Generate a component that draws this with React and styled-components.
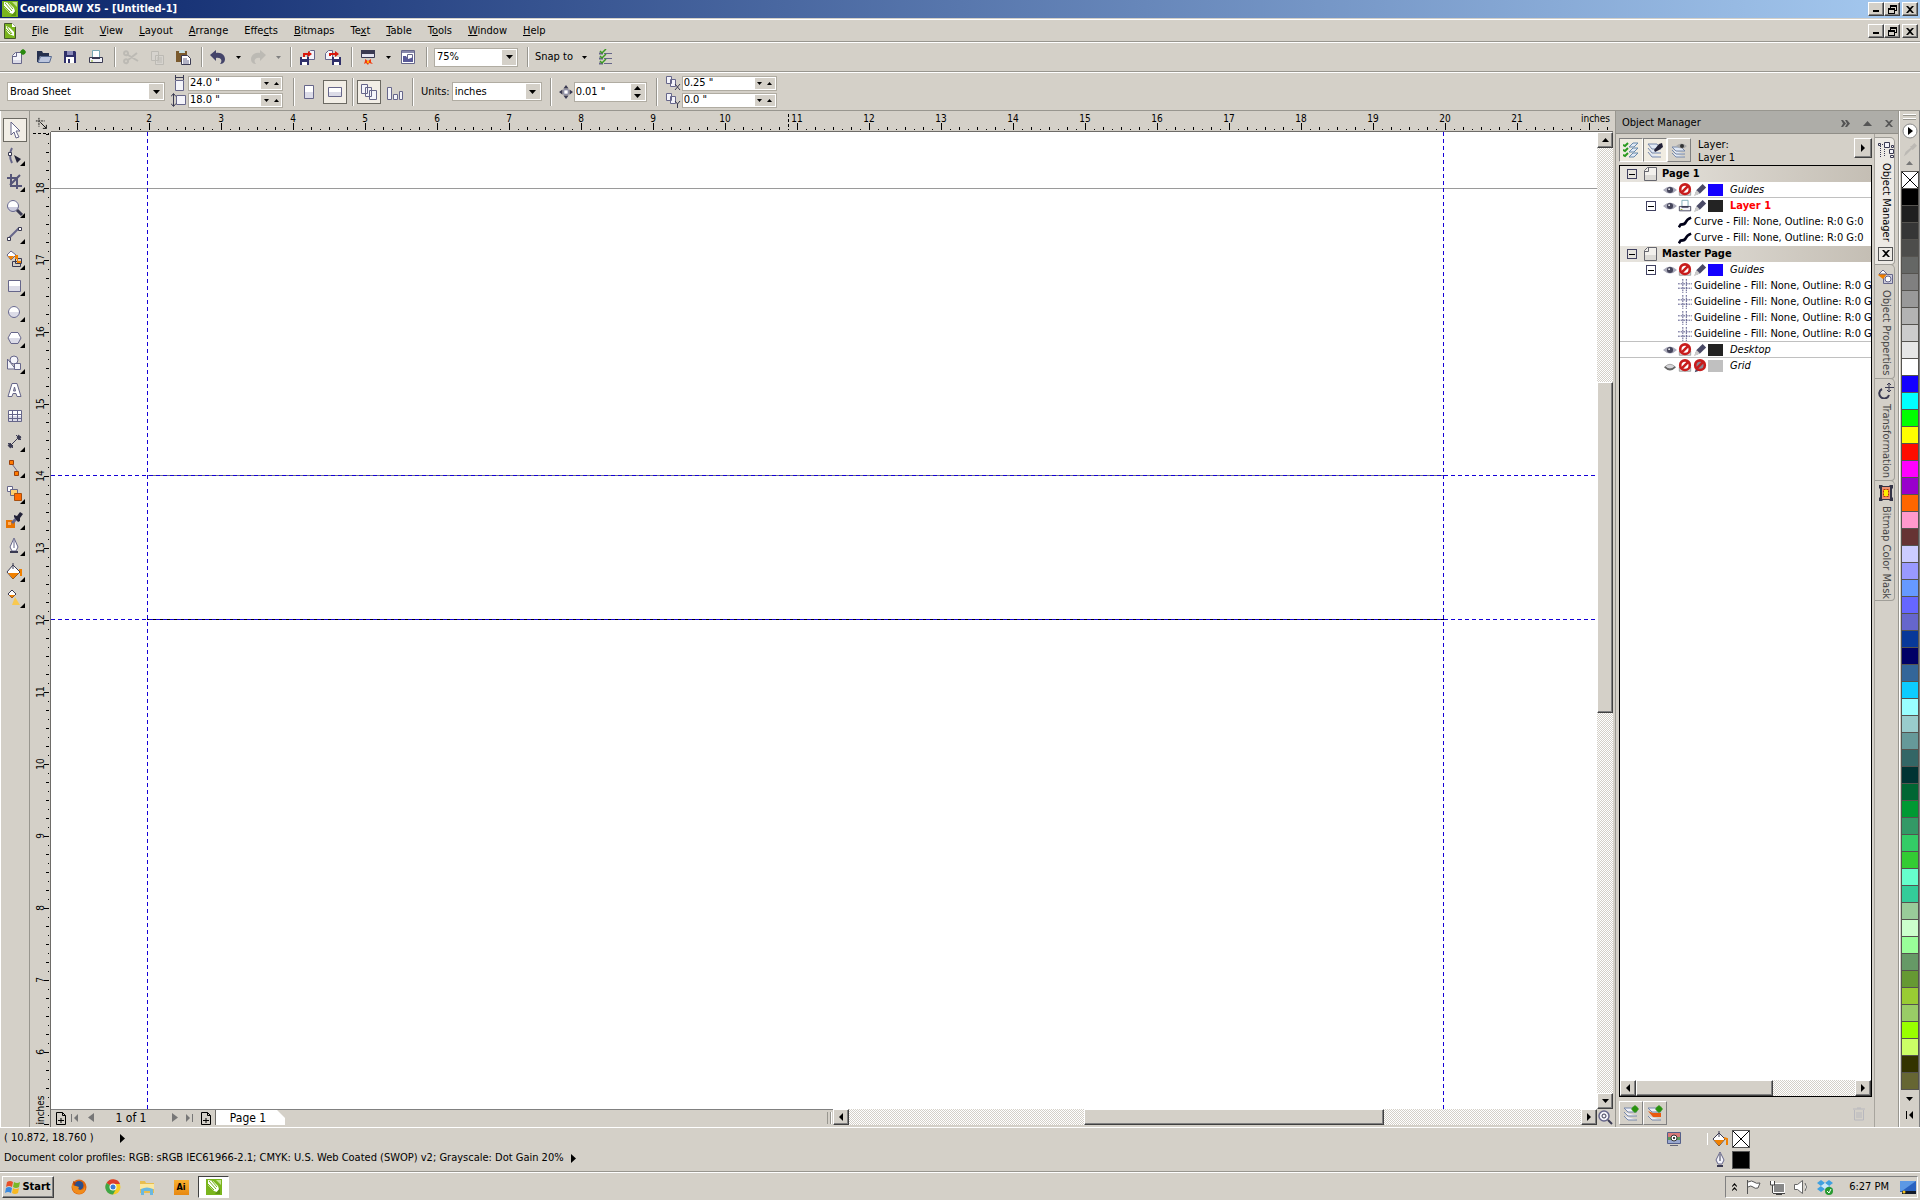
// src/App.jsx
import React, { useState } from 'react';
import styled, { createGlobalStyle, css } from 'styled-components';

const FACE = '#d4d0c8';
const SHADOW = '#808080';
const CHECKER = 'repeating-conic-gradient(#ffffff 0 25%, #d4d0c8 0 50%) 0 0 / 2px 2px';

const GlobalStyle = createGlobalStyle`
    * {
        box-sizing: border-box;
    }

    body {
        margin: 0;
        background: ${FACE};
        color: #000;
        font-family: 'DejaVu Sans Condensed', 'DejaVu Sans', 'Noto Sans', sans-serif;
        font-size: 11px;
        line-height: 14px;
        overflow: hidden;
    }

    button, input, select {
        font: inherit;
        color: inherit;
        margin: 0;
        padding: 0;
    }

    svg {
        display: block;
        flex: none;
    }
`;

const raised = css`
    border: 1px solid;
    border-color: #fff #404040 #404040 #fff;
    box-shadow: inset -1px -1px 0 ${SHADOW};
    background: ${FACE};
`;

const Window = styled.div`
    display: flex;
    flex-direction: column;
    height: 100vh;
`;

const TitleBar = styled.header`
    display: flex;
    align-items: center;
    height: 19px;
    padding: 0 2px;
    gap: 2px;
    background: linear-gradient(90deg, #0a246a, #a6caf0);
    border-bottom: 1px solid ${FACE};
`;

const Title = styled.h1`
    flex: 1;
    margin: 0;
    color: #fff;
    font-size: 11px;
    line-height: 14px;
    font-weight: bold;
`;

const CaptionGroup = styled.div`
    display: flex;

    button:last-child {
        margin-left: 2px;
    }
`;

const CaptionButton = styled.button`
    ${raised}
    display: grid;
    place-items: center;
    width: 16px;
    height: 14px;
`;

const MenuBar = styled.nav`
    display: flex;
    align-items: center;
    height: 23px;
    padding: 1px 2px 0;
    border-top: 1px solid #fff;
    border-bottom: 1px solid #98968f;
`;

const MenuItem = styled.button`
    padding: 0 8px;
    border: none;
    background: none;
`;

const MenuList = styled.div`
    display: flex;
    flex: 1;
    padding-left: 6px;
`;

const Toolbar = styled.div`
    display: flex;
    align-items: center;
    height: ${(p) => (p.$tall ? 39 : 30)}px;
    padding: 0 5px;
    border-top: 1px solid #fff;
    border-bottom: 1px solid #98968f;
`;

const ToolbarButton = styled.button`
    display: grid;
    place-items: center;
    width: ${(p) => p.$width || 26}px;
    height: 24px;
    border: none;
    background: none;
    opacity: ${(p) => (p.disabled ? 0.3 : 1)};
`;

const ToggleButton = styled.button`
    display: grid;
    place-items: center;
    flex: none;
    width: 24px;
    height: 24px;
    border: 1px solid ${(p) => (p.$pressed ? '#6b6962' : 'transparent')};
    background: ${(p) => (p.$pressed ? '#f2eee6' : 'none')};
`;

const Separator = styled.span`
    width: 2px;
    height: ${(p) => p.$height || 20}px;
    margin: 0 ${(p) => p.$after || 2}px 0 ${(p) => p.$before || 5}px;
    border-left: 1px solid #98968f;
    border-right: 1px solid #fff;
`;

const Field = styled.div`
    display: flex;
    align-items: center;
    width: ${(p) => p.$width}px;
    height: ${(p) => p.$height || 19}px;
    padding: 1px;
    border: 1px solid #b0aca2;
    background: #fff;
    margin-left: ${(p) => p.$left || 0}px;
`;

const Select = styled.select`
    flex: 1;
    min-width: 0;
    padding-left: 1px;
    border: none;
    background: none;
    appearance: none;
    outline: none;
`;

const Arrow = styled.span`
    display: grid;
    place-items: center;
    width: 14px;
    height: 15px;
    background: ${FACE};
`;

const TextInput = styled.input`
    flex: 1;
    min-width: 0;
    height: 12px;
    border: none;
    background: none;
    outline: none;
`;

const SpinButtons = styled.div`
    display: flex;
    flex-direction: ${(p) => (p.$stacked ? 'column' : 'row')};
    background: ${FACE};
`;

const SpinButton = styled.button`
    display: grid;
    place-items: center;
    width: ${(p) => p.$width || 10}px;
    height: ${(p) => p.$height || 11}px;
    border: none;
    background: none;
`;

const FieldStack = styled.div`
    display: grid;
    gap: 1px;
    margin-left: ${(p) => p.$left || 0}px;
`;

const FieldRow = styled.label`
    display: flex;
    align-items: center;
    gap: 1px;
`;

const Workspace = styled.main`
    display: flex;
    flex: 1;
    min-height: 0;
`;

const Toolbox = styled.div`
    width: 30px;
    padding: 7px 2px 0;
    border-left: 1px solid #fff;
    border-right: 1px solid #98968f;
    display: flex;
    flex-direction: column;
    align-items: center;
    gap: 2px;
`;

const Document = styled.section`
    flex: 1;
    min-width: 0;
    display: grid;
    grid-template-columns: 21px minmax(0, 1fr) 16px;
    grid-template-rows: 21px minmax(0, 1fr) 18px;
    padding-right: 2px;
`;

const RulerCorner = styled.div`
    display: grid;
    place-items: center;
    padding: 4px 0 0 2px;
`;

const HorizontalRuler = styled.div`
    grid-column: 2 / 4;
    border-bottom: 1px solid #6e6c68;
    overflow: hidden;
`;

const VerticalRuler = styled.div`
    grid-row: 2 / 4;
    border-right: 1px solid #6e6c68;
    overflow: hidden;
`;

const RulerText = styled.text`
    font-size: 10px;
    text-anchor: ${(p) => p.$anchor || 'middle'};
`;

const Page = styled.div`
    background: #fff;
    overflow: hidden;
`;

const ScrollBar = styled.div`
    display: flex;
    flex-direction: ${(p) => (p.$vertical ? 'column' : 'row')};
    flex: 1;
    min-width: 0;
    background: ${CHECKER};
`;

const ScrollButton = styled.button`
    ${raised}
    display: grid;
    place-items: center;
    flex: none;
    width: 16px;
    height: 16px;
`;

const ScrollGap = styled.span`
    flex: ${(p) => p.$share};
`;

const ScrollThumb = styled.div`
    ${raised}
    flex: ${(p) => p.$share};
`;

const BottomBar = styled.div`
    display: flex;
    height: 16px;
`;

const PageBar = styled.div`
    display: flex;
    align-items: center;
    flex: 0 0 782px;
    min-width: 0;
    padding-left: 2px;
    border-top: 1px solid #808080;
`;

const PageButton = styled.button`
    display: grid;
    place-items: center;
    width: ${(p) => p.$width || 16}px;
    height: 15px;
    border: none;
    background: none;
`;

const PageCount = styled.span`
    width: 64px;
    margin-right: 6px;
    text-align: center;
    font-size: 12px;
`;

const PageTab = styled.button`
    width: 70px;
    height: 15px;
    border: none;
    border-left: 1px solid #6e6c68;
    background: #fff;
    font-size: 12px;
    line-height: 14px;
    clip-path: polygon(0 0, 62px 0, 70px 8px, 70px 100%, 0 100%);
    padding-right: 5px;
`;

const Splitter = styled.span`
    width: 4px;
    height: 12px;
    margin: 0 2px 0 auto;
    border: solid #98968f;
    border-width: 0 1px;
    box-shadow: 1px 0 0 #fff;
`;

const Docker = styled.aside`
    display: grid;
    grid-template-columns: 256px 26px;
    grid-template-rows: 23px minmax(0, 1fr);
    width: 284px;
    border-left: 1px solid #98968f;
    border-right: 1px solid #98968f;
`;

const DockerTitle = styled.header`
    grid-column: 1 / 3;
    display: flex;
    align-items: center;
    gap: 13px;
    padding: 2px 5px 0 6px;
    background: #aeada8;
    border-bottom: 1px solid #908e88;

    h2 {
        flex: 1;
        margin: 0;
        font-size: 11px;
        font-weight: normal;
    }

    button {
        border: none;
        background: none;
    }
`;

const DockerBody = styled.div`
    display: flex;
    flex-direction: column;
    padding: 4px 0 2px 3px;
`;

const LayerHead = styled.div`
    display: flex;
    align-items: flex-start;
    height: 27px;
`;

const LayerButton = styled.button`
    display: grid;
    place-items: center;
    width: 24px;
    height: 24px;
    border: 1px solid;
    border-color: ${(p) => (p.$pressed ? '#808080 #fff #fff #808080' : '#fff #808080 #808080 #fff')};
    background: ${(p) => (p.$pressed ? '#f0ece2' : FACE)};
`;

const LayerName = styled.p`
    flex: 1;
    margin: 0;
    padding-left: 7px;
    line-height: 13px;
`;

const SmallRaised = styled.button`
    ${raised}
    display: grid;
    place-items: center;
    width: 18px;
    height: 20px;
`;

const TreeBox = styled.div`
    display: flex;
    flex-direction: column;
    flex: 1;
    border: 1px solid #000;
    background: #fff;
    overflow: hidden;
`;

const Tree = styled.ul`
    flex: 1;
    margin: 0;
    padding: 0;
    list-style: none;
`;

const TreeRow = styled.li`
    display: flex;
    align-items: center;
    height: 16px;
    padding-left: ${(p) => p.$indent}px;
    gap: ${(p) => p.$gap || 0}px;
    white-space: nowrap;
    overflow: hidden;
    background: ${(p) => (p.$header ? 'linear-gradient(90deg, #e8e5df, #c4beb4)' : 'none')};
    box-shadow: ${(p) => (p.$line ? 'inset 0 -1px 0 #c0c0c0' : 'none')};
    font-weight: ${(p) => (p.$header ? 'bold' : 'normal')};
`;

const Expander = styled.button`
    display: grid;
    place-items: center;
    flex: none;
    width: 10px;
    height: 10px;
    margin-right: ${(p) => p.$after || 0}px;
    border: 1px solid #404060;
    background: none;
    visibility: ${(p) => (p.$hidden ? 'hidden' : 'visible')};
`;

const LayerColor = styled.span`
    width: 15px;
    height: 12px;
    margin-right: 6px;
    background: ${(p) => p.$color};
`;

const LayerLabel = styled.span`
    font-style: ${(p) => (p.$active ? 'normal' : 'italic')};
    font-weight: ${(p) => (p.$active ? 'bold' : 'normal')};
    color: ${(p) => (p.$active ? '#ff0000' : '#000')};
`;

const LayerFoot = styled.div`
    display: flex;
    align-items: center;
    height: 28px;
    padding: 3px 5px 0 0;

    > svg {
        margin-left: auto;
    }
`;

const DockerTabs = styled.div`
    display: flex;
    flex-direction: column;
    padding: 3px 3px 0 0;
    margin-left: 2px;
    border-left: 1px solid #a8a59e;
`;

const DockerTab = styled.button`
    display: flex;
    flex-direction: column;
    align-items: center;
    gap: 5px;
    width: 20px;
    height: ${(p) => p.$height}px;
    padding: 4px 0 0 2px;
    border: 1px solid #a09e98;
    border-left: none;
    border-radius: 0 5px 4px 0;
    background: ${(p) => (p.$active ? '#ece9e4' : FACE)};
    color: ${(p) => (p.$active ? '#000' : '#444')};
    margin-bottom: -1px;

    span {
        writing-mode: vertical-rl;
        white-space: nowrap;
    }
`;

const CloseTab = styled.i`
    display: grid;
    place-items: center;
    width: 15px;
    height: 15px;
    margin-top: auto;
    margin-bottom: 3px;
    border: 1px solid #555;
`;

const Palette = styled.aside`
    display: flex;
    flex-direction: column;
    align-items: center;
    width: 21px;
    padding-top: 3px;
    border-left: 1px solid #fff;
    border-right: 1px solid #808080;
`;

const PaletteHead = styled.div`
    display: flex;
    flex-direction: column;
    align-items: center;
    gap: 4px;
    height: 57px;
`;

const Grip = styled.span`
    width: 13px;
    height: 5px;
    border: solid #fff;
    border-width: 1px 0;
    box-shadow: 0 1px 0 #98968f, inset 0 1px 0 #98968f;
`;

const Swatch = styled.button`
    display: block;
    flex: none;
    width: 18px;
    height: 17px;
    border: 1px solid #55534f;
    border-bottom-width: 0;
    background: ${(p) => p.$color};
`;

const PaletteFoot = styled.div`
    display: grid;
    justify-items: center;
    align-content: start;
    gap: 10px;
    flex: 1;
    width: 18px;
    padding-top: 7px;
    border-top: 1px solid #55534f;
`;

const StatusBar = styled.footer`
    display: flex;
    height: 45px;
    border-top: 1px solid #fff;
    border-bottom: 1px solid #98968f;
    padding-left: 4px;
`;

const StatusText = styled.div`
    flex: 1;

    p {
        display: flex;
        align-items: center;
        gap: 7px;
        margin: 0;
        height: 20px;
    }

    p:first-child {
        gap: 26px;
    }
`;

const StatusColors = styled.div`
    display: grid;
    grid-template-columns: 42px 24px 18px;
    grid-template-rows: 18px 18px;
    row-gap: 3px;
    place-items: center;
    width: 254px;
    padding-top: 2px;
    justify-content: start;
`;

const ProofCell = styled.div`
    width: 42px;
    height: 12px;
    display: flex;
    align-items: center;
    border-right: 1px solid #fff;
`;

const ColorBox = styled.span`
    width: 18px;
    height: 18px;
    border: 1px solid #555;
    background: ${(p) => p.$color};
`;

const TaskBar = styled.footer`
    display: flex;
    align-items: center;
    height: 28px;
    padding: 2px 2px 1px;
    border-top: 1px solid #fff;
`;

const StartButton = styled.button`
    ${raised}
    display: flex;
    align-items: center;
    justify-content: center;
    gap: 1px;
    width: 52px;
    height: 22px;
    margin-right: 8px;
    font-weight: bold;
`;

const TaskButton = styled.button`
    display: grid;
    place-items: center;
    width: ${(p) => (p.$active ? 31 : 34)}px;
    height: 22px;
    border: 1px solid;
    border-color: ${(p) => (p.$active ? '#404040 #fff #fff #404040' : 'transparent')};
    background: ${(p) => (p.$active ? '#fff' : 'none')};
`;

const AppBadge = styled.span`
    width: 15px;
    height: 15px;
    background: linear-gradient(#f8b030, #e88810);
    font-size: 9px;
    font-weight: bold;
`;

const Tray = styled.div`
    display: flex;
    align-items: center;
    gap: 8px;
    height: 22px;
    margin-left: auto;
    padding: 0 1px 0 6px;
    border: 1px solid;
    border-color: #808080 #fff #fff #808080;

    time {
        padding: 0 3px 0 8px;
    }
`;

// outline and fill tones shared by the drawn icons
const ink = '#3a3a52';
const mid = '#66668a';
const pale = '#f4f4fa';
const orange = '#f08000';

const Corner = () => <path d="M20 15v5h-5z" fill="#000" stroke="none" />;

const icons = {
    corel: (
        <g>
            <rect width="16" height="16" fill="#7ab51d" />
            <path d="M2 1l5 1 5 5 2 7-6-2-6-6z" fill="#fff" />
            <path d="M3 2l7 8M6 2l5 6M2 5l6 6" stroke="#7ab51d" />
            <path d="M10 1h5v5z" fill="#c6e391" />
            <path d="M14 9v6H9z" fill="#5c9410" />
        </g>
    ),
    corelDoc: (
        <g>
            <path d="M2.500.5h8l3 3v12h-11z" fill="#7ab51d" stroke="#44582c" />
            <path d="M10 0v4h4z" fill="#fff" />
            <path d="M4 3l4 2 4 4v4l-5-2-3-4z" fill="#fff" />
            <path d="M5 4l5 7M4 6l5 5" stroke="#7ab51d" />
        </g>
    ),
    newDoc: (
        <g>
            <path d="M2.500 6.500l3-3h6v11h-9z" fill={pale} stroke={mid} />
            <path d="M2.500 7.500h4v-4" stroke={mid} fill="none" />
            <path d="M3 11h8v3H3z" fill="#dcdce8" />
            <circle cx="13" cy="3" r="2.500" fill="#2a8a10" />
            <path d="M13 0v6M10 3h6" stroke="#2a8a10" />
        </g>
    ),
    open: (
        <g>
            <path d="M1 2h5l1 2h6v3H4l-2 6H1z" fill="#25304e" />
            <path d="M4.500 7.500h11l-2 6H2z" fill="#bcc6de" stroke="#586a90" />
        </g>
    ),
    save: (
        <g>
            <path d="M2 2h11l1 1v11H2z" fill="#30306a" />
            <rect x="5" y="2" width="6" height="4" fill="#8a8ab8" />
            <rect x="4" y="8" width="8" height="6" fill="#fff" />
            <rect x="6" y="10" width="2" height="4" fill="#30306a" />
        </g>
    ),
    print: (
        <g>
            <path d="M4.500 8V1.500h7V8" fill="#fff" stroke="#78a8b4" />
            <path d="M1.500 8.500h13v5h-13z" fill="#f0f0f6" stroke={ink} />
            <path d="M4 9h8" stroke={ink} strokeWidth="2" />
            <path d="M3 12h2" stroke="#8aaa20" />
        </g>
    ),
    cut: <path d="M5 6l10 6M5 11l9-7M5 4a2 2 0 1 0-3 2 2 2 0 0 0 3-2M5 12a2 2 0 1 0-3 2 2 2 0 0 0 3-2" fill="none" stroke="#888" strokeWidth="2" />,
    copy: <path d="M2.500 2.500h7v9h-7zM6.500 6.500h8v9h-8zM8 9h5M8 11h5M8 13h5" fill="#ddd" stroke="#888" />,
    paste: (
        <g>
            <path d="M1 2h11v11H1z" fill="#7a5a2e" />
            <path d="M4 3a3 2 0 0 1 6 0v1H4z" fill="#c5dfe2" />
            <path d="M6.500 6.500h6l3 3v6h-9z" fill="#fff" stroke={ink} />
            <path d="M8 10h4M8 12h6M8 14h6" stroke={mid} />
        </g>
    ),
    undo: <path d="M0 6l6-5v3c6-1 9 3 9 6 0 4-3 5-5 5 3-3 1-7-4-6v3z" fill="#44446a" />,
    redo: <path d="M16 6l-6-5v3C4 3 1 7 1 10c0 4 3 5 5 5-3-3-1-7 4-6v3z" fill="#888" />,
    import: (
        <g>
            <path d="M8.500 4.500l3-3h4v9h-7z" fill={pale} stroke={mid} />
            <path d="M1 8h9v8H1z" fill="#30306a" />
            <path d="M3 8h5v2H3zM3 13h5v3H3z" fill="#fff" />
            <path d="M4 8V4h5V2l4 3-4 3V6H6v2z" fill="#d8180c" />
        </g>
    ),
    export: (
        <g>
            <path d="M.5 4.500l3-3h4v9h-7z" fill={pale} stroke={mid} />
            <path d="M7 8h9v8H7z" fill="#30306a" />
            <path d="M9 8h5v2H9zM9 13h5v3H9z" fill="#fff" />
            <path d="M4 7V4h6V2l4 3-4 3V6H6v1z" fill="#d8180c" />
        </g>
    ),
    launcher: (
        <g>
            <path d="M1.500 1.500h13v7h-13z" fill="#e4e4f0" stroke={ink} />
            <path d="M1 1h14v4H1z" fill={ink} />
            <path d="M5 10l3 2 3-2v3l2 2-4-1-1 2-2-2-2 1 1-3z" fill="#f03c10" />
            <path d="M7 12h2v2H7z" fill="#ffb000" />
        </g>
    ),
    welcome: (
        <g>
            <path d="M1.500 1.500h13v13h-13z" fill="#fff" stroke={mid} />
            <path d="M2 2h12v2H2z" fill="#8888aa" />
            <path d="M7.500 5.500h5v6h-5z" fill="#fff" stroke={mid} />
            <path d="M3 7h3l2 3 3-1 2-1v5H3z" fill="#5a5a98" />
        </g>
    ),
    checks: (
        <g fill="none">
            <path d="M6 4.500h8M6 9.500h8M6 14.500h8" stroke={mid} />
            <path d="M1 4.500h4M1 9.500h4M1 14.500h4" stroke={mid} strokeWidth="2" />
            <path d="M2 2l2 2 4-4M2 7l2 2 4-4M2 12l2 2 4-4" stroke="#3a9a20" strokeWidth="1.500" />
        </g>
    ),
    pageWidth: (
        <g>
            <path d="M4.500 5.500h8v10h-8z" fill={pale} stroke={mid} />
            <path d="M4 2.500h9M4.500 0v5M12.500 0v5" stroke={ink} />
        </g>
    ),
    pageHeight: (
        <g>
            <path d="M5.500 3.500h9v9h-9z" fill={pale} stroke={mid} />
            <path d="M2.500 2v12M0 4.500l2.500-3 2.500 3M0 11.500l2.500 3 2.500-3" stroke={ink} fill="none" />
        </g>
    ),
    portrait: (
        <g>
            <path d="M4 8h8v6H4z" fill="#dcdce8" />
            <path d="M4 2h8v6H4z" fill="#fff" />
            <path d="M3.500 1.500h9v13h-9z" fill="none" stroke={mid} />
        </g>
    ),
    landscape: (
        <g>
            <path d="M2 4h12v4H2z" fill="#fff" />
            <path d="M2 8h12v4H2z" fill="#dcdce8" />
            <path d="M1.500 3.500h13v9h-13z" fill="none" stroke={mid} />
        </g>
    ),
    allPages: <path d="M.5.5h6v9h-6zM4.500 3.500h6v9h-6zM8.500 6.500h7v9h-7z" fill={pale} stroke={mid} />,
    currentPage: <path d="M.5 3.500h4v12h-4zM6.500 10.500h4v5h-4zM12.500 7.500h3v8h-3z" fill={pale} stroke={mid} />,
    nudge: (
        <g fill={ink}>
            <path d="M8 0l3 4H5zM8 16l3-4H5zM0 8l4-3v6zM16 8l-4-3v6z" />
            <rect x="5.500" y="5.500" width="5" height="5" fill="#fff" stroke={mid} />
        </g>
    ),
    dupX: (
        <g>
            <path d="M1.500 1.500h5v7h-5zM5.500 4.500h5v7h-5z" fill={pale} stroke={mid} />
            <path d="M10 9l5 6M15 9l-5 6" stroke={ink} />
        </g>
    ),
    dupY: (
        <g>
            <path d="M1.500 1.500h5v7h-5zM5.500 4.500h5v7h-5z" fill={pale} stroke={mid} />
            <path d="M10 9l2.500 3L15 9M12.500 12v4" stroke={ink} fill="none" />
        </g>
    ),
    origin: (
        <g stroke="#000" fill="none">
            <path d="M4.500 1v10M1 4.500h10" strokeDasharray="2 1" />
            <path d="M6 6l7 7M13 9v4H9" />
        </g>
    ),
    plusPage: (
        <g stroke="#000" fill="none">
            <path d="M3.500 2.500h6l3 3v9h-9z" />
            <path d="M9.500 2.500v3h3M5 10.500h6M8 8v5" />
        </g>
    ),
    magnifier: (
        <g>
            <circle cx="7" cy="7" r="5" fill={pale} stroke={mid} strokeWidth="1.500" />
            <circle cx="7" cy="7" r="2" fill="none" stroke={ink} />
            <path d="M11 11l4 4" stroke={ink} strokeWidth="2" />
        </g>
    ),
    eye: (
        <g>
            <path d="M0 8q8-8 16 0-8 8-16 0" fill="#a8a8b8" />
            <circle cx="8" cy="8" r="3.500" fill="#44445a" />
            <circle cx="7" cy="7" r="1" fill="#fff" />
        </g>
    ),
    eyeClosed: (
        <g>
            <path d="M2 9q6-6 12 0-6 5-12 0" fill="#d4d4d8" stroke="#999" />
            <path d="M2 9q6 6 12 0" fill="none" stroke="#666" strokeWidth="2" />
        </g>
    ),
    printNo: (
        <g>
            <path d="M1.500 9h13v5h-13z" fill="#ddd" stroke="#999" />
            <circle cx="8" cy="7" r="5.500" fill="#fff" stroke="#c81c1c" strokeWidth="3" />
            <path d="M4 11l8-8" stroke="#c81c1c" strokeWidth="3" />
        </g>
    ),
    pencil: (
        <g>
            <path d="M2 14l2-6 7-7 4 4-7 7z" fill="#4a4a66" />
            <path d="M1 15l3-7 4 4z" fill="#ccc" />
        </g>
    ),
    pencilNo: (
        <g>
            <path d="M2 15l2-6 7-6 4 4-7 6z" fill="#4a4a66" />
            <circle cx="8" cy="7" r="5.500" fill="#8a8a98" stroke="#c81c1c" strokeWidth="3" />
            <path d="M4 11l8-8" stroke="#c81c1c" strokeWidth="3" />
        </g>
    ),
    page: (
        <g>
            <path d="M2.500 4.500l3-3h9v13h-12z" fill="#f2f0ec" stroke="#66666e" />
            <path d="M3 9h11v5H3z" fill="#dcdad6" />
            <path d="M2.500 5.500h4v-4" fill="none" stroke="#66666e" />
        </g>
    ),
    curve: <path d="M1 14l2-3q5 0 6-3t6-5" fill="none" stroke="#000018" strokeWidth="3" />,
    guideline: <path d="M5.500 0v16M9.500 0v16M0 5.500h16M0 10.500h16" stroke="#44447a" strokeDasharray="2 1" />,
    layersCheck: (
        <g>
            <path d="M6 5l4-4h5l-4 4zM6 10l4-4h5l-4 4zM6 15l4-4h5l-4 4z" fill="#e0e8f4" stroke="#6688aa" />
            <path d="M0 3l2 1 3-3M0 8l2 1 3-3M0 13l2 1 3-3" fill="none" stroke="#2a9a20" strokeWidth="2" />
        </g>
    ),
    layersEdit: (
        <g>
            <path d="M1 2h9l4 5H5zM1 6l4 5h9M1 10l4 5h9" fill="#e0e8f4" stroke="#7788aa" />
            <path d="M7 8l5-6 3-1 1 4-4 3-4 2z" fill="#222238" />
        </g>
    ),
    layersEye: (
        <g>
            <path d="M1 5h9l4 4H5zM1 8l4 4h9M1 11l4 4h9" fill="#e0e8f4" stroke="#7788aa" />
            <path d="M5 4q5-5 11 0-5 5-11 0" fill="#aaa" />
            <circle cx="11" cy="4" r="2" fill="#333" />
        </g>
    ),
    newLayer: (
        <g>
            <path d="M1 3h9l4 4H5zM1 7l4 4h9M1 11l4 4h9" fill="#f0f0f8" stroke="#7788aa" />
            <circle cx="12" cy="4" r="3" fill="#2a9210" />
            <path d="M12 0v8M8 4h8" stroke="#2a9210" />
        </g>
    ),
    newMaster: (
        <g>
            <path d="M1 3h9l4 4H5zM1 11l4 4h9" fill="#f0f0f8" stroke="#7788aa" />
            <path d="M1 6l5 2h8v4H6z" fill="#ea5a10" />
            <circle cx="12" cy="4" r="3" fill="#2a9210" />
            <path d="M12 0v8M8 4h8" stroke="#2a9210" />
        </g>
    ),
    trash: <path d="M2 4h12M6 3h4M3.500 5v10h9V5M6 7v6M8 7v6M10 7v6" fill="none" stroke="#b8b8be" />,
    tabObjects: (
        <g fill={pale} stroke={ink}>
            <path d="M4 2.500h3M2.500 4v11M6.500 7v8" strokeDasharray="1 1" />
            <path d="M6.500.5h5v5h-5zM11.500 7.500h4v4h-4zM.5 1.500h2v2h-2zM12.500 13.500h3v2h-3zM13.500 3.500h2v2h-2z" />
        </g>
    ),
    tabProps: (
        <g>
            <path d="M5.500 5.500h9v9h-9z" fill="#ccd" stroke={mid} />
            <circle cx="10" cy="10" r="3" fill="#fff" stroke={mid} />
            <path d="M0 6l5-5 4 4-4 5z" fill={orange} />
            <path d="M1 5l4-4 4 4z" fill="#fff" stroke={mid} />
        </g>
    ),
    tabTransform: (
        <g fill="none" stroke={ink}>
            <path d="M4 6a5 5 0 1 0 7 6" strokeWidth="2" />
            <path d="M11 0v9M7 4.500h9M9 2l2-2 2 2M9 7l2 2 2-2" />
        </g>
    ),
    tabMask: (
        <g>
            <path d="M1 0h3l1 1h6l1-1h3v3l-1 1v8l1 1v3h-3l-1-1H5l-1 1H1v-3l1-1V4L1 3z" fill="#333346" />
            <path d="M4 2h8v12H4z" fill="#f09070" />
            <path d="M5.500 4.500h5v7h-5z" fill="#ffee00" stroke="#b03010" strokeDasharray="2 1" />
        </g>
    ),
    circleArrow: (
        <g>
            <circle cx="8" cy="8" r="7" fill="#fff" stroke="#888" />
            <path d="M6 4l5 4-5 4z" />
        </g>
    ),
    dropper: <path d="M1 15l2-5 6-5-1-1 2-1 3-3 3 3-4 4-1 1-1-1-6 6z" fill="#bcb9b4" />,
    proof: (
        <g>
            <path d="M1.500 1.500h13v11h-13z" fill="#9aa8d0" stroke="#55608a" />
            <path d="M2 2h12v4H2z" fill="#d87a7a" />
            <path d="M2 6h3v3H2zM11 6h3v3h-3z" fill="#5a9a5a" />
            <circle cx="8" cy="7" r="3" fill="#fff" stroke="#333" />
            <circle cx="8" cy="7" r="1" />
            <path d="M4 14.500h8" stroke="#667" />
        </g>
    ),
    fill: (
        <g>
            <path d="M1 8l6-6 6 6-6 7z" fill="#fff" stroke={ink} />
            <path d="M2 9h10l-5 6z" fill={orange} />
            <path d="M12 7l3 1v6" stroke={orange} strokeWidth="2" fill="none" />
            <path d="M7 0v6" stroke={ink} />
        </g>
    ),
    pen: (
        <g>
            <path d="M8 0l4 8-2 4H6L4 8z" fill={pale} stroke={mid} />
            <path d="M8 2v7" stroke={ink} />
            <path d="M5 13h6v2H5z" fill={ink} />
        </g>
    ),
    windows: (
        <g>
            <path d="M2 3q3-2 6 0L7 8Q4 6 1 8z" fill="#e8502a" />
            <path d="M9 3q3 2 6 0l-1 5q-3 2-6 0z" fill="#7ab828" />
            <path d="M1 9q3-2 6 0l-1 5q-3-2-6 0z" fill="#3a8ae0" />
            <path d="M8 9q3 2 6 0l-1 5q-3 2-6 0z" fill="#f8b820" />
        </g>
    ),
    firefox: (
        <g>
            <circle cx="8" cy="8" r="7.500" fill="#e0660c" />
            <circle cx="8" cy="6.500" r="4.500" fill="#2c4f8c" />
            <path d="M1 4q1 3 4 3l3 1q-2 3 2 3 3 0 4-4 1 8-6 8Q0 14 1 4" fill="#f08c1c" />
            <path d="M2 2l3 2-2 3z" fill="#a83a10" />
        </g>
    ),
    chrome: (
        <g>
            <circle cx="8" cy="8" r="7.500" fill="#f6cc24" />
            <path d="M8 8L1.500 4A7.500 7.500 0 0 1 15 5H8z" fill="#dc3c2c" />
            <path d="M1.500 4A7.500 7.500 0 0 0 8 15.500L11 10z" fill="#3fa648" />
            <circle cx="8" cy="8" r="3.500" fill="#fff" />
            <circle cx="8" cy="8" r="2.500" fill="#3a7cd8" />
        </g>
    ),
    explorer: (
        <g>
            <path d="M1 2h5l1 2h8v10H1z" fill="#e8be50" />
            <path d="M1 5h14v5H1z" fill="#fbe8a0" />
            <path d="M2 16v-6q6-3 12 0v6h-3v-4H5v4z" fill="#6ab8e0" />
        </g>
    ),
    flag: <path d="M2.500 1v14M3 3q4-2 6 0t6 1l-2 5q-3 1-5-1t-5 0" fill="#fff" stroke="#555" />,
    network: (
        <g>
            <path d="M4.500 4.500h11v9h-11z" fill="#888" stroke="#fff" />
            <path d="M4 14.500h12M7 15.500h6" stroke="#444" />
            <path d="M1.500 2v4h4V2M3.500 6v8" stroke="#444" fill="#fff" />
        </g>
    ),
    sound: <path d="M1.500 5.500h3l5-4v13l-5-4h-3zM12 4q3 4 0 8" fill="#fff" stroke="#666" />,
    dropbox: (
        <g>
            <path d="M4 1l4 3-4 3-4-3zM12 1l4 3-4 3-4-3zM4 7l4 3-4 3-4-3zM12 7l4 3-4 3-4-3z" fill="#3fa0e0" />
            <path d="M8 4l4 3-4 3-4-3z" fill="#c8e8fa" />
            <circle cx="12" cy="12" r="4" fill="#289a30" />
            <path d="M10 12l2 2 2-4" stroke="#fff" fill="none" />
        </g>
    ),
    desktop: (
        <g>
            <path d="M0 2h16v11H0z" fill="#2a62c0" />
            <path d="M0 2h16L2 12H0z" fill="#5c98e4" />
            <path d="M2 12h14v3H2z" fill="#101828" />
            <circle cx="4" cy="13" r="1.500" fill="#f0c020" />
        </g>
    ),
    none: <path d="M0 0l16 16M16 0L0 16" stroke="#000" />
};

// toolbox icons, drawn on a 20px grid with the flyout corner
const tools = [
    ['Pick', <path d="M6 2v13l3-3 2 6 3-1-3-6h4z" fill="#fff" stroke={mid} />, false],
    ['Shape', <g><path d="M7 2q-4 7 0 15" fill="none" stroke={mid} strokeWidth="2" /><path d="M3.500 6.500h3v3h-3z" fill="#fff" stroke={ink} /><path d="M9 9l7 4-4 4z" fill="#222238" /></g>, true],
    ['Crop', <path d="M6 2v12h11M2 6h10v11M5 13L15 3" fill="none" stroke="#555578" strokeWidth="2" />, true],
    ['Zoom', <g><circle cx="8" cy="8" r="6" fill="#fff" /><path d="M2 9h12q-1 5-6 5T2 9" fill="#ccd" /><circle cx="8" cy="8" r="5.500" fill="none" stroke={mid} /><path d="M12 12l5 5" stroke={ink} strokeWidth="3" /></g>, true],
    ['Freehand', <g><path d="M4 14L14 4" stroke={mid} strokeWidth="2" /><path d="M2.500 13.500h3v3h-3zM13.500 3.500h3v3h-3z" fill="#fff" stroke={ink} /></g>, true],
    ['Smart Fill', <g><path d="M2 5l4-4 5 4-5 5z" fill="#fff" stroke={mid} /><path d="M3 6h6l-3 4z" fill={orange} /><path d="M7.500 11.500h8v5h-8zM10.500 8.500h6v5h-6z" fill="none" stroke={ink} /><path d="M10 5v4h2v4h4v-2h-3V5z" fill={orange} /></g>, true],
    ['Rectangle', <g><path d="M4 4h11v6H4z" fill="#fff" /><path d="M4 10h11v5H4z" fill="#dcdce8" /><path d="M3.500 4.500h12v11h-12z" fill="none" stroke={mid} /></g>, true],
    ['Ellipse', <g><circle cx="9" cy="10" r="6" fill="#fff" /><path d="M3 10h12q-1 6-6 6t-6-6" fill="#dcdce8" /><circle cx="9" cy="10" r="5.500" fill="none" stroke={mid} /></g>, true],
    ['Polygon', <g><path d="M6 4h7l3 6H3z" fill="#fff" /><path d="M3 10h13l-3 6H6z" fill="#dcdce8" /><path d="M6 4.500h7l3 5.500-3 5.500H6L3 10z" fill="none" stroke={mid} /></g>, true],
    ['Basic Shapes', <g fill={pale} stroke={mid}><path d="M2.500 5v10h8z" /><circle cx="9" cy="6" r="4" /><path d="M9.500 9.500h6v6h-6z" /></g>, true],
    ['Text', <path d="M7 3.500h5l4 13h-4l-1-3H8l-1 3H3zM9.500 7l-1 4h2z" fill="#fff" stroke={mid} />, false],
    ['Table', <g><path d="M3 10h13v6H3z" fill="#dcdce8" /><path d="M3 4h13v6H3z" fill="#fff" /><path d="M3.500 4.500h13v11h-13zM3 8.500h13M3 12.500h13M7.500 4v12M12.500 4v12" fill="none" stroke={mid} /></g>, false],
    ['Dimension', <path d="M5 14L14 5M3 11l5 5M3 14l2-3 3 3-3 2M11 3l5 5M13 3l3 2-2 3-2-3" fill={ink} stroke={ink} />, true],
    ['Connector', <g><path d="M7 6l6 8" stroke={mid} /><path d="M4.500 2.500h4v4h-4zM9.500 13.500h4v4h-4z" fill="#ff7a00" stroke="#98400c" /></g>, true],
    ['Blend', <g><path d="M2.500 2.500h5v5h-5z" fill="#fff" stroke={mid} /><path d="M5.500 5.500h7v6h-7z" fill="#ffd070" stroke={mid} /><path d="M9.500 9.500h7v7h-7z" fill="#ff6a00" stroke="#a85010" /></g>, true],
    ['Eyedropper', <g><path d="M1 10h9v8H1z" fill="#e87400" /><path d="M3 12h3v3H3zM7 10h2v2H7z" fill="#ffb060" /><path d="M7 13l6-6" stroke={mid} strokeWidth="3" /><path d="M9 5l3 1 3-4 3 2-3 4v3l-2 1-4-5z" fill="#222238" /></g>, true],
    ['Outline Pen', <g><path d="M9 2l4 9-2 4H7l-2-4z" fill="#fff" stroke={mid} /><path d="M9 4v8" stroke={mid} /><path d="M5 15h8v2H5z" fill={ink} /></g>, true],
    ['Fill', <g><path d="M2 10l6-7 7 7-7 7z" fill="#fff" stroke={ink} /><path d="M3 11h11l-6 6z" fill={orange} /><path d="M8 1v6" stroke={ink} /><path d="M14 8h2v6" stroke={orange} strokeWidth="2" fill="none" /></g>, true],
    ['Interactive Fill', <g><path d="M3 6l4-4 4 4-4 4z" fill="#fff" stroke={ink} /><path d="M4 7h6l-3 3z" fill={orange} /><path d="M10 9l5 8H7z" fill="#f8c850" /></g>, true]
];

const Icon = ({ name, size = 16, box = 16 }) => (
    <svg width={size} height={size} viewBox={`0 0 ${box} ${box}`} aria-hidden="true">{icons[name]}</svg>
);

const shapes = {
    down: [7, 4, 'M0 0h7L3.500 4z'],
    up: [7, 4, 'M0 4h7L3.500 0z'],
    wideUp: [9, 5, 'M0 5h9L4.500 0z'],
    left: [4, 8, 'M4 0v8L0 4z'],
    right: [4, 8, 'M0 0v8l4-4z'],
    bigRight: [5, 9, 'M0 0v9l5-4.500z'],
    navLeft: [6, 9, 'M6 0v9L0 4.500z'],
    navRight: [6, 9, 'M0 0v9l6-4.500z'],
    smallDown: [5, 3, 'M0 0h5L2.500 3z'],
    smallUp: [5, 3, 'M0 3h5L2.500 0z'],
    first: [7, 8, 'M0 0h1v8H0zM7 0v8L3 4z'],
    last: [7, 8, 'M6 0h1v8H6zM0 0v8l4-4z'],
    minus: [6, 1, 'M0 0h6v1H0z'],
    minimize: [6, 6, 'M0 4h6v2H0z'],
    restore: [9, 9, 'M2 0h7v6H7V5h1V2H3v1H2zM0 3h7v6H0zM1 5v3h5V5z'],
    close: [8, 7, 'M0 0h2l2 2 2-2h2L5 3.500 8 7H6L4 5 2 7H0l3-3.500z'],
    double: [9, 7, 'M0 0h2l3 3.500L2 7H0l2-3.500zM4 0h2l3 3.500L6 7H4l2-3.500z'],
    doubleUp: [5, 8, 'M0 3l2.500-3L5 3v1L2.500 2 0 4zM0 7l2.500-3L5 7v1L2.500 6 0 8z']
};

const Glyph = ({ name, color = '#000' }) => {
    const [width, height, d] = shapes[name];
    return (
        <svg width={width} height={height} viewBox={`0 0 ${width} ${height}`} aria-hidden="true">
            <path d={d} fill={color} fillRule="evenodd" />
        </svg>
    );
};

const menus = [
    ['', 'F', 'ile'], ['', 'E', 'dit'], ['', 'V', 'iew'], ['', 'L', 'ayout'], ['', 'A', 'rrange'],
    ['Effe', 'c', 'ts'], ['', 'B', 'itmaps'], ['Te', 'x', 't'], ['', 'T', 'able'], ['T', 'o', 'ols'],
    ['', 'W', 'indow'], ['', 'H', 'elp']
];

const colors = [
    '#000000', '#1f1f1f', '#363636', '#4d4d4b', '#656765', '#808080', '#999999', '#b3b3b3', '#cccccc', '#e6e6e6',
    '#ffffff', '#1400ff', '#00ffff', '#00ff00', '#ffff00', '#ff0d00', '#ff00ff', '#9900cc', '#ff6600', '#ff99cc',
    '#663333', '#ccccff', '#9999ff', '#6699ff', '#6666ff', '#6666cc', '#083899', '#000066', '#336699', '#0cccff',
    '#99ffff', '#99cccc', '#669999', '#336666', '#003333', '#006633', '#009933', '#339966', '#33cc66', '#33cc33',
    '#66ffcc', '#33cc99', '#99cc99', '#ccffcc', '#99ff99', '#669966', '#669933', '#99cc33', '#99cc66', '#99ff00',
    '#ccff66', '#333300', '#666633'
];

const INCH = 72;
const eighths = Array.from({ length: 190 }, (_, i) => i);

const tickLength = (i) => {
    if (i % 8 === 0) return 7;
    return i % 2 === 0 ? 3 : 1;
};

const Caption = () => (
    <CaptionGroup>
        <CaptionButton aria-label="Minimize"><Glyph name="minimize" /></CaptionButton>
        <CaptionButton aria-label="Restore"><Glyph name="restore" /></CaptionButton>
        <CaptionButton aria-label="Close"><Glyph name="close" /></CaptionButton>
    </CaptionGroup>
);

const Combo = ({ label, options, width, left }) => (
    <Field $width={width} $left={left}>
        <Select aria-label={label}>
            {options.map((o) => <option key={o}>{o}</option>)}
        </Select>
        <Arrow><Glyph name="down" /></Arrow>
    </Field>
);

const SizeField = ({ icon, label, initial }) => {
    const [value, setValue] = useState(initial);

    return (
        <FieldRow>
            <Icon name={icon} />
            <Field $width={95} $height={15}>
                <TextInput aria-label={label} value={value} onChange={(e) => setValue(e.target.value)} />
                <SpinButtons>
                    <SpinButton aria-label={`${label} down`}><Glyph name="smallDown" /></SpinButton>
                    <SpinButton aria-label={`${label} up`}><Glyph name="smallUp" /></SpinButton>
                </SpinButtons>
            </Field>
        </FieldRow>
    );
};

const StandardBar = () => (
    <Toolbar>
        {['newDoc', 'open', 'save', 'print'].map((n) => <ToolbarButton key={n} aria-label={n}><Icon name={n} /></ToolbarButton>)}
        <Separator />
        <ToolbarButton aria-label="Cut" disabled><Icon name="cut" /></ToolbarButton>
        <ToolbarButton aria-label="Copy" disabled><Icon name="copy" /></ToolbarButton>
        <ToolbarButton aria-label="Paste"><Icon name="paste" /></ToolbarButton>
        <Separator />
        <ToolbarButton aria-label="Undo"><Icon name="undo" /></ToolbarButton>
        <ToolbarButton $width={14} aria-label="Undo list"><Glyph name="smallDown" /></ToolbarButton>
        <ToolbarButton aria-label="Redo" disabled><Icon name="redo" /></ToolbarButton>
        <ToolbarButton $width={14} aria-label="Redo list"><Glyph name="smallDown" color="#808080" /></ToolbarButton>
        <Separator />
        <ToolbarButton aria-label="Import"><Icon name="import" /></ToolbarButton>
        <ToolbarButton aria-label="Export"><Icon name="export" /></ToolbarButton>
        <Separator />
        <ToolbarButton aria-label="Application launcher"><Icon name="launcher" /></ToolbarButton>
        <ToolbarButton $width={14} aria-label="Launcher list"><Glyph name="smallDown" /></ToolbarButton>
        <ToolbarButton aria-label="Welcome screen"><Icon name="welcome" /></ToolbarButton>
        <Separator />
        <Combo label="Zoom level" options={['75%', '100%', '200%']} width={84} left={4} />
        <Separator $before={9} $after={6} />
        <ToolbarButton $width={38}>Snap&nbsp;to</ToolbarButton>
        <ToolbarButton $width={22} aria-label="Snap list"><Glyph name="smallDown" /></ToolbarButton>
        <ToolbarButton $width={22} aria-label="Options"><Icon name="checks" /></ToolbarButton>
    </Toolbar>
);

const PropertyBar = () => {
    const [nudge, setNudge] = useState('0.01 "');

    return (
        <Toolbar $tall>
            <Combo label="Page size" options={['Broad Sheet', 'Letter', 'Legal']} width={158} left={2} />
            <FieldStack $left={6}>
                <SizeField icon="pageWidth" label="Page width" initial={'24.0 "'} />
                <SizeField icon="pageHeight" label="Page height" initial={'18.0 "'} />
            </FieldStack>
            <Separator $height={28} $before={10} $after={2} />
            <ToggleButton aria-label="Portrait"><Icon name="portrait" /></ToggleButton>
            <ToolGap />
            <ToggleButton $pressed aria-label="Landscape"><Icon name="landscape" /></ToggleButton>
            <Separator $height={28} $before={5} $after={3} />
            <ToggleButton $pressed aria-label="All pages"><Icon name="allPages" /></ToggleButton>
            <ToolGap />
            <ToggleButton aria-label="Current page"><Icon name="currentPage" /></ToggleButton>
            <Separator $height={28} $before={5} $after={7} />
            <label htmlFor="units">Units:</label>
            <Field $width={90} $left={2}>
                <Select id="units">
                    <option>inches</option>
                    <option>millimeters</option>
                </Select>
                <Arrow><Glyph name="down" /></Arrow>
            </Field>
            <Separator $height={28} $before={8} $after={7} />
            <FieldRow>
                <Icon name="nudge" size={14} />
                <Field $width={73} $height={20}>
                    <TextInput aria-label="Nudge offset" value={nudge} onChange={(e) => setNudge(e.target.value)} />
                    <SpinButtons $stacked>
                        <SpinButton $width={14} $height={8} aria-label="Nudge up"><Glyph name="up" /></SpinButton>
                        <SpinButton $width={14} $height={8} aria-label="Nudge down"><Glyph name="down" /></SpinButton>
                    </SpinButtons>
                </Field>
            </FieldRow>
            <Separator $height={28} $before={9} $after={7} />
            <FieldStack>
                <SizeField icon="dupX" label="Duplicate X" initial={'0.25 "'} />
                <SizeField icon="dupY" label="Duplicate Y" initial={'0.0 "'} />
            </FieldStack>
        </Toolbar>
    );
};

const ToolGap = styled.span`
    width: 2px;
`;

const TopRuler = () => (
    <HorizontalRuler>
        <svg width="100%" height="20" shapeRendering="crispEdges">
            {eighths.map((i) => {
                const x = 26 + (i - 2) * 9;
                const length = tickLength(i - 2);
                return <rect key={i} x={x} y={length === 7 ? 12 : 19 - length} width="1" height={length} />;
            })}
            {Array.from({ length: 21 }, (_, i) => (
                <RulerText key={i} x={26 + i * INCH} y="11">{i + 1}</RulerText>
            ))}
            <path d="M737.500 3v16" stroke="#000" strokeDasharray="3 2" />
            <RulerText x="100%" dx="-3" y="11" $anchor="end">inches</RulerText>
        </svg>
    </HorizontalRuler>
);

const SideRuler = () => (
    <VerticalRuler>
        <svg width="20" height="100%" shapeRendering="crispEdges">
            {eighths.map((i) => {
                const length = Math.min(tickLength(i - 6), 5);
                return <rect key={i} x={19 - length} y={56 + (i - 6) * 9} width={length} height="1" />;
            })}
            {Array.from({ length: 13 }, (_, i) => (
                <RulerText key={i} transform={`translate(14 ${56 + i * INCH}) rotate(-90)`}>{18 - i}</RulerText>
            ))}
            <path d="M3 1.500h16" stroke="#000" strokeDasharray="3 2" />
            <RulerText transform="translate(14 978) rotate(-90)">inches</RulerText>
        </svg>
    </VerticalRuler>
);

const Drawing = () => (
    <Page>
        <svg width="100%" height="100%" shapeRendering="crispEdges">
            <path d="M0 56.500h3000" stroke="#9a9a9a" />
            <path d="M96 343.500h1297" stroke="#70708a" />
            <path d="M96 487.500h1297" stroke="#000" />
            <g stroke="#1400d8" strokeDasharray="4 3">
                <path d="M0 343.500h3000" />
                <path d="M0 487.500h3000" />
                <path d="M96.500 0v3000" />
                <path d="M1392.500 0v3000" />
            </g>
        </svg>
    </Page>
);

const PageNavigator = () => (
    <PageBar>
        <PageButton aria-label="Add page before" $width={12}><Icon name="plusPage" /></PageButton>
        <PageButton aria-label="First page" $width={18}><Glyph name="first" color="#777" /></PageButton>
        <PageButton aria-label="Previous page"><Glyph name="navLeft" color="#777" /></PageButton>
        <PageCount>1 of 1</PageCount>
        <PageButton aria-label="Next page" $width={12}><Glyph name="navRight" color="#777" /></PageButton>
        <PageButton aria-label="Last page"><Glyph name="last" color="#777" /></PageButton>
        <PageButton aria-label="Add page after" $width={18}><Icon name="plusPage" /></PageButton>
        <PageTab>Page 1</PageTab>
        <Splitter />
    </PageBar>
);

const LayerRow = ({ name, color, expander, active, line, eye = 'eye', print = 'printNo', pencil = 'pencil' }) => (
    <TreeRow $indent={26} $line={line} $gap={1}>
        <Expander $hidden={!expander} $after={6} aria-label={`Collapse ${name}`}><Glyph name="minus" /></Expander>
        <Icon name={eye} size={14} />
        <Icon name={print} size={14} />
        <Icon name={pencil} size={14} />
        <LayerColor $color={color} />
        <LayerLabel $active={active}>{name}</LayerLabel>
    </TreeRow>
);

const GroupRow = ({ name }) => (
    <TreeRow $header $indent={7} $gap={4}>
        <Expander $after={1} aria-label={`Collapse ${name}`}><Glyph name="minus" /></Expander>
        <Icon name="page" />
        {name}
    </TreeRow>
);

const ObjectRow = ({ icon, text, line }) => (
    <TreeRow $indent={58} $gap={2} $line={line}>
        <Icon name={icon} size={14} />
        {text}
    </TreeRow>
);

const ObjectManager = () => (
    <Docker>
        <DockerTitle>
            <h2>Object Manager</h2>
            <button aria-label="Collapse"><Glyph name="double" color="#555" /></button>
            <button aria-label="Roll up"><Glyph name="wideUp" color="#555" /></button>
            <button aria-label="Close docker"><Glyph name="close" color="#555" /></button>
        </DockerTitle>
        <DockerBody>
            <LayerHead>
                <LayerButton $pressed aria-label="Show object properties"><Icon name="layersCheck" /></LayerButton>
                <LayerButton $pressed aria-label="Edit across layers"><Icon name="layersEdit" /></LayerButton>
                <LayerButton aria-label="Layer manager view"><Icon name="layersEye" /></LayerButton>
                <LayerName>Layer:<br />Layer 1</LayerName>
                <SmallRaised aria-label="Object manager options"><Glyph name="right" /></SmallRaised>
            </LayerHead>
            <TreeBox>
                <Tree>
                    <GroupRow name="Page 1" />
                    <LayerRow name="Guides" color="#1400ff" line />
                    <LayerRow name="Layer 1" color="#232323" print="print" expander active />
                    <ObjectRow icon="curve" text="Curve - Fill: None, Outline: R:0 G:0" />
                    <ObjectRow icon="curve" text="Curve - Fill: None, Outline: R:0 G:0" />
                    <GroupRow name="Master Page" />
                    <LayerRow name="Guides" color="#1400ff" expander />
                    {[1, 2, 3, 4].map((n) => (
                        <ObjectRow key={n} icon="guideline" text="Guideline - Fill: None, Outline: R:0 G" line={n === 4} />
                    ))}
                    <LayerRow name="Desktop" color="#232323" line />
                    <LayerRow name="Grid" color="#c0c0c0" eye="eyeClosed" pencil="pencilNo" />
                </Tree>
                <BottomBar>
                    <ScrollBar>
                        <ScrollButton aria-label="Scroll tree left"><Glyph name="left" /></ScrollButton>
                        <ScrollThumb $share={136} />
                        <ScrollGap $share={82} />
                        <ScrollButton aria-label="Scroll tree right"><Glyph name="right" /></ScrollButton>
                    </ScrollBar>
                </BottomBar>
            </TreeBox>
            <LayerFoot>
                <LayerButton aria-label="New layer"><Icon name="newLayer" /></LayerButton>
                <LayerButton aria-label="New master layer"><Icon name="newMaster" /></LayerButton>
                <Icon name="trash" />
            </LayerFoot>
        </DockerBody>
        <DockerTabs>
            <DockerTab $active $height={128}>
                <Icon name="tabObjects" />
                <span>Object Manager</span>
                <CloseTab><Glyph name="close" /></CloseTab>
            </DockerTab>
            <DockerTab $height={115}><Icon name="tabProps" /><span>Object Properties</span></DockerTab>
            <DockerTab $height={103}><Icon name="tabTransform" /><span>Transformation</span></DockerTab>
            <DockerTab $height={121}><Icon name="tabMask" /><span>Bitmap Color Mask</span></DockerTab>
        </DockerTabs>
    </Docker>
);

const ColorPalette = () => (
    <Palette>
        <PaletteHead>
            <Grip />
            <Icon name="circleArrow" />
            <Icon name="dropper" size={14} />
            <Glyph name="up" color="#777" />
        </PaletteHead>
        <Swatch $color="#fff" aria-label="No color"><Icon name="none" /></Swatch>
        {colors.map((c) => <Swatch key={c} $color={c} aria-label={c} />)}
        <PaletteFoot>
            <Glyph name="down" />
            <Glyph name="first" />
        </PaletteFoot>
    </Palette>
);

const App = () => {
    const [tool, setTool] = useState('Pick');

    return (
        <>
            <GlobalStyle />
            <Window>
                <TitleBar>
                    <Icon name="corel" />
                    <Title>CorelDRAW X5 - [Untitled-1]</Title>
                    <Caption />
                </TitleBar>
                <MenuBar>
                    <Icon name="corelDoc" />
                    <MenuList>
                        {menus.map(([before, key, after]) => (
                            <MenuItem key={before + key + after}>{before}<u>{key}</u>{after}</MenuItem>
                        ))}
                    </MenuList>
                    <Caption />
                </MenuBar>
                <StandardBar />
                <PropertyBar />
                <Workspace>
                    <Toolbox>
                        {tools.map(([name, art, flyout]) => (
                            <ToggleButton key={name} aria-label={name} $pressed={tool === name} onClick={() => setTool(name)}>
                                <svg width="20" height="20" viewBox="0 0 20 20">
                                    {art}
                                    {flyout && <Corner />}
                                </svg>
                            </ToggleButton>
                        ))}
                    </Toolbox>
                    <Document>
                        <RulerCorner><Icon name="origin" size={14} /></RulerCorner>
                        <TopRuler />
                        <SideRuler />
                        <Drawing />
                        <ScrollBar $vertical>
                            <ScrollButton aria-label="Scroll up"><Glyph name="up" /></ScrollButton>
                            <ScrollGap $share={234} />
                            <ScrollThumb $share={330} />
                            <ScrollGap $share={381} />
                            <ScrollButton aria-label="Scroll down"><Glyph name="down" /></ScrollButton>
                        </ScrollBar>
                        <BottomBar>
                            <PageNavigator />
                            <ScrollBar>
                                <ScrollButton aria-label="Scroll left"><Glyph name="left" /></ScrollButton>
                                <ScrollGap $share={236} />
                                <ScrollThumb $share={298} />
                                <ScrollGap $share={198} />
                                <ScrollButton aria-label="Scroll right"><Glyph name="right" /></ScrollButton>
                            </ScrollBar>
                        </BottomBar>
                        <Icon name="magnifier" />
                    </Document>
                    <ObjectManager />
                    <ColorPalette />
                </Workspace>
                <StatusBar>
                    <StatusText>
                        <p>( 10.872, 18.760 ) <Glyph name="bigRight" /></p>
                        <p>Document color profiles: RGB: sRGB IEC61966-2.1; CMYK: U.S. Web Coated (SWOP) v2; Grayscale: Dot Gain 20% <Glyph name="bigRight" /></p>
                    </StatusText>
                    <StatusColors>
                        <ProofCell><Icon name="proof" /></ProofCell>
                        <Icon name="fill" />
                        <ColorBox $color="#fff"><Icon name="none" /></ColorBox>
                        <span />
                        <Icon name="pen" />
                        <ColorBox $color="#000" />
                    </StatusColors>
                </StatusBar>
                <TaskBar>
                    <StartButton><Icon name="windows" />Start</StartButton>
                    <TaskButton aria-label="Firefox"><Icon name="firefox" /></TaskButton>
                    <TaskButton aria-label="Chrome"><Icon name="chrome" /></TaskButton>
                    <TaskButton aria-label="Explorer"><Icon name="explorer" /></TaskButton>
                    <TaskButton aria-label="Illustrator"><AppBadge>Ai</AppBadge></TaskButton>
                    <TaskButton $active aria-label="CorelDRAW"><Icon name="corel" /></TaskButton>
                    <Tray>
                        <Glyph name="doubleUp" />
                        <Icon name="flag" />
                        <Icon name="network" />
                        <Icon name="sound" />
                        <Icon name="dropbox" />
                        <time>6:27 PM</time>
                        <Icon name="desktop" />
                    </Tray>
                </TaskBar>
            </Window>
        </>
    );
};

export default App;
